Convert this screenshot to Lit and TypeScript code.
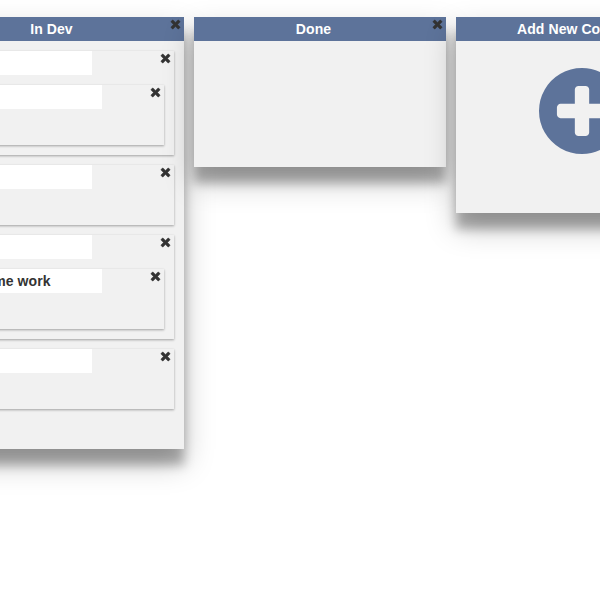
import { LitElement, html, css, nothing, TemplateResult } from "lit";
import { customElement } from "lit/decorators.js";

interface Card {
  title: string;
  children?: Card[];
}

interface Column {
  title: string;
  cards: Card[];
}

const columns: Column[] = [
  {
    title: "In Dev",
    cards: [
      { title: "", children: [{ title: "" }] },
      { title: "" },
      { title: "", children: [{ title: "Do some work" }] },
      { title: "" },
    ],
  },
  { title: "Done", cards: [] },
];

const closeIcon = html`<svg class="close" viewBox="110 -18 1188 1188" aria-hidden="true">
  <path
    transform="translate(0 1152) scale(1 -1)"
    d="M1298 214q0 -40 -28 -68l-136 -136q-28 -28 -68 -28t-68 28l-294 294l-294 -294q-28 -28 -68 -28t-68 28l-136 136q-28 28 -28 68t28 68l294 294l-294 294q-28 28 -28 68t28 68l136 136q28 28 68 28t68 -28l294 -294l294 294q28 28 68 28t68 -28l136 -136q28 -28 28 -68t-28 -68l-294 -294l294 -294q28 -28 28 -68z"
  />
</svg>`;

const plusIcon = html`<svg class="plus" viewBox="0 0 1536 1536" aria-hidden="true">
  <path
    transform="translate(0 1408) scale(1 -1)"
    d="M1216 576v128q0 26 -19 45t-45 19h-256v256q0 26 -19 45t-45 19h-128q-26 0 -45 -19t-19 -45v-256h-256q-26 0 -45 -19t-19 -45v-128q0 -26 19 -45t45 -19h256v-256q0 -26 19 -45t45 -19h128q26 0 45 19t19 45v256h256q26 0 45 19t19 45zM1536 640q0 -209 -103 -385.5t-279.5 -279.5t-385.5 -103t-385.5 103t-279.5 279.5t-103 385.5t103 385.5t279.5 279.5t385.5 103t385.5 -103t279.5 -279.5t103 -385.5z"
  />
</svg>`;

@customElement("app-root")
export class AppRoot extends LitElement {
  static styles = css`
    :host {
      display: block;
      height: 600px;
      overflow: hidden;
      background: #fff;
      color: #333;
      font: bold 14px/20px "Liberation Sans", Arial, sans-serif;
      letter-spacing: 0.07px;
    }
    /* The board is scrolled sideways, so its first column is cut off. */
    .board {
      display: flex;
      align-items: flex-start;
      gap: 10px;
      width: max-content;
      margin-left: -68px;
      padding-top: 17px;
    }
    .column {
      position: relative;
      box-sizing: border-box;
      width: 252px;
      min-height: 150px;
      padding-bottom: 40px;
      background: #f1f1f1;
      box-shadow: 0 14px 28px rgba(0, 0, 0, 0.25), 0 16px 10px rgba(0, 0, 0, 0.28);
    }
    .header {
      display: flex;
      height: 24px;
      background: #5d739a;
      color: #fff;
    }
    .name {
      flex: 1;
      line-height: 24px;
      text-align: center;
    }
    .adder .name {
      padding-right: 13px;
    }
    .close {
      flex: none;
      width: 9px;
      height: 9px;
      margin: 3px 4px 0 auto;
      overflow: visible;
      fill: #333;
      stroke: #333;
      stroke-width: 60;
    }
    .card {
      display: flex;
      flex-wrap: wrap;
      align-content: flex-start;
      min-height: 60px;
      margin: 10px 10px 0;
      background: #f1f1f1;
      box-shadow: 0 1px 3px rgba(0, 0, 0, 0.12), 0 1px 2px rgba(0, 0, 0, 0.24);
    }
    .label {
      box-sizing: border-box;
      width: 150px;
      height: 24px;
      padding: 0 2px;
      background: #fff;
      line-height: 24px;
      white-space: nowrap;
    }
    .children {
      width: 100%;
      padding-bottom: 10px;
    }
    .adder {
      height: 196px;
      padding-bottom: 0;
    }
    .plus {
      display: block;
      width: 86px;
      height: 86px;
      margin: 27px auto 0;
      overflow: visible;
      fill: #5d739a;
    }
  `;

  private card(card: Card): TemplateResult {
    return html`<div class="card">
      <div class="label">${card.title}</div>
      ${closeIcon}
      ${card.children
        ? html`<div class="children">${card.children.map((c) => this.card(c))}</div>`
        : nothing}
    </div>`;
  }

  render() {
    return html`<div class="board">
      ${columns.map(
        (column) => html`<section class="column">
          <div class="header"><div class="name">${column.title}</div>${closeIcon}</div>
          ${column.cards.map((c) => this.card(c))}
        </section>`
      )}
      <section class="column adder">
        <div class="header"><div class="name">Add New Column</div></div>
        ${plusIcon}
      </section>
    </div>`;
  }
}
